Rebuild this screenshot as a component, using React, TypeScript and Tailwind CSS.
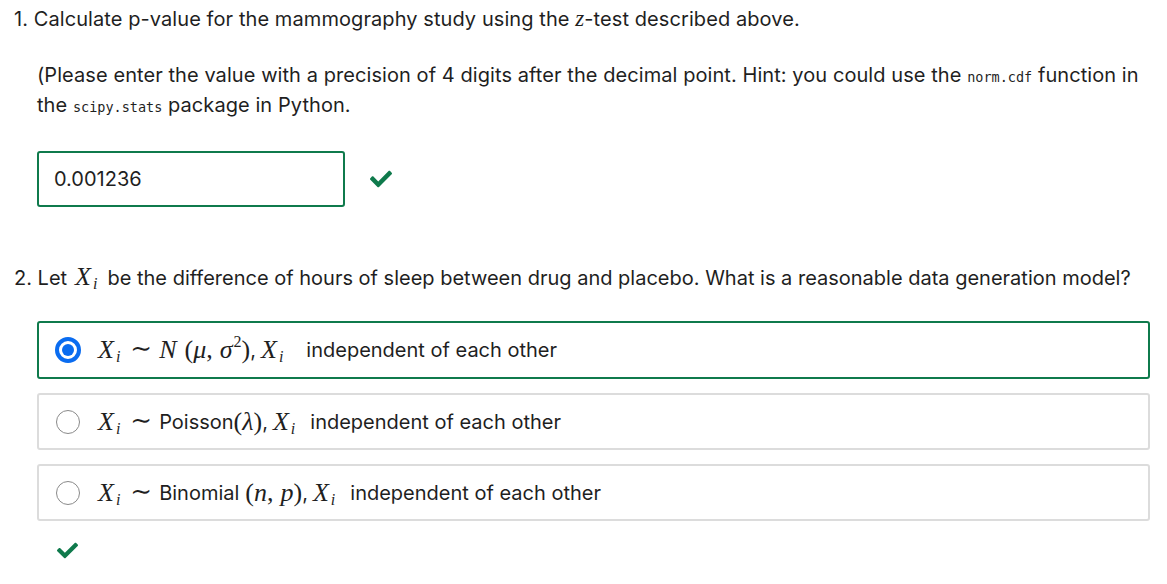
import React from "react";
import { FaCheck } from "react-icons/fa";

const sans = "font-['Inter','Noto_Sans',sans-serif]";
const mono = "font-['DejaVu_Sans_Mono','Liberation_Mono',monospace]";
const math = "font-['Liberation_Serif','DejaVu_Serif',serif]";

const sym = `${math} text-[26px] leading-none`;
const ital = `${math} italic text-[26px] leading-none`;

function Xi() {
  return (
    <span className={`${ital} whitespace-nowrap`}>
      X<span className="text-[16px] relative top-[4px] ml-[2px]">i</span>
    </span>
  );
}

function Tilde() {
  return <span className={`${sym} ml-[10px] mr-[7px] relative -top-[1px]`}>∼</span>;
}

function Radio({ checked }: { checked: boolean }) {
  if (checked) {
    return (
      <span className="w-[26px] h-[26px] rounded-full border-[4px] border-[#0a6cf0] flex items-center justify-center shrink-0">
        <span className="w-[12px] h-[12px] rounded-full bg-[#0a6cf0]" />
      </span>
    );
  }
  return <span className="w-[24px] h-[24px] rounded-full border-[1.5px] border-[#8a8a8a] shrink-0 mx-[1px]" />;
}

function Tail({ wide }: { wide?: boolean }) {
  return (
    <>
      <span className="mr-[5px]">,</span>
      <Xi />
      <span className={wide ? "ml-[23px]" : "ml-[15px]"}>independent of each other</span>
    </>
  );
}

const options = [
  {
    checked: true,
    body: (
      <>
        <Xi />
        <Tilde />
        <span className={`${ital} mr-[8px]`}>N</span>
        <span className={sym}>(</span>
        <span className={ital}>μ</span>
        <span className={`${sym} mr-[7px]`}>,</span>
        <span className={ital}>σ</span>
        <span className={`${math} text-[16px] relative -top-[8px] ml-[1px]`}>2</span>
        <span className={sym}>)</span>
        <Tail wide />
      </>
    ),
  },
  {
    checked: false,
    body: (
      <>
        <Xi />
        <Tilde />
        <span>Poisson</span>
        <span className={sym}>(</span>
        <span className={ital}>λ</span>
        <span className={sym}>)</span>
        <Tail />
      </>
    ),
  },
  {
    checked: false,
    body: (
      <>
        <Xi />
        <Tilde />
        <span className="mr-[6px]">Binomial</span>
        <span className={sym}>(</span>
        <span className={ital}>n</span>
        <span className={`${sym} mr-[7px]`}>,</span>
        <span className={ital}>p</span>
        <span className={sym}>)</span>
        <Tail />
      </>
    ),
  },
];

export default function App() {
  return (
    <div className={`${sans} w-[1167px] h-[584px] bg-white text-[#1f1f1f] text-[20px] pt-[4px] pl-[14px] overflow-hidden`}>
      {/* Question 1 */}
      <p className="leading-[30px] h-[30px] tracking-[0.08px]">
        1. Calculate p-value for the mammography study using the{" "}
        <span className={`${math} italic text-[23px] leading-none`}>z</span>-test described above.
      </p>

      <div className="ml-[23px]">
        <p className="mt-[26px] leading-[30px] h-[60px] tracking-[0.07px]">
          (Please enter the value with a precision of 4 digits after the decimal point. Hint: you could use the{" "}
          <code className={`${mono} text-[13.5px] leading-none tracking-normal`}>norm.cdf</code> function in
          <br />
          the <code className={`${mono} text-[13.5px] leading-none tracking-normal`}>scipy.stats</code> package in Python.
        </p>

        <div className="mt-[31px] flex items-center h-[56px]">
          <div className="w-[308px] h-[56px] border-2 border-[#0f7a4c] rounded-[3px] flex items-center pl-[15px]">
            0.001236
          </div>
          <FaCheck className="w-[22px] h-[22px] ml-[25px] text-[#0f7a4c]" />
        </div>
      </div>

      {/* Question 2 */}
      <p className="mt-[56px] leading-[30px] h-[30px] flex items-center whitespace-nowrap">
        2. Let<span className="ml-[8px] mr-[10px]"><Xi /></span>be the difference of hours of sleep between drug and placebo. What is a reasonable data generation model?
      </p>

      <div className="ml-[23px] mt-[28px] w-[1113px] flex flex-col gap-[14px]">
        {options.map((o, i) => (
          <div
            key={i}
            className={`flex items-center pl-[16px] rounded-[3px] ${
              o.checked ? "h-[58px] border-2 border-[#0f7a4c]" : "h-[57px] border-2 border-[#dcdcdc]"
            }`}
          >
            <Radio checked={o.checked} />
            <div className="ml-[17px] flex items-center whitespace-nowrap">{o.body}</div>
          </div>
        ))}
      </div>

      <FaCheck className="w-[21px] h-[21px] ml-[43px] mt-[19px] text-[#0f7a4c]" />
    </div>
  );
}
